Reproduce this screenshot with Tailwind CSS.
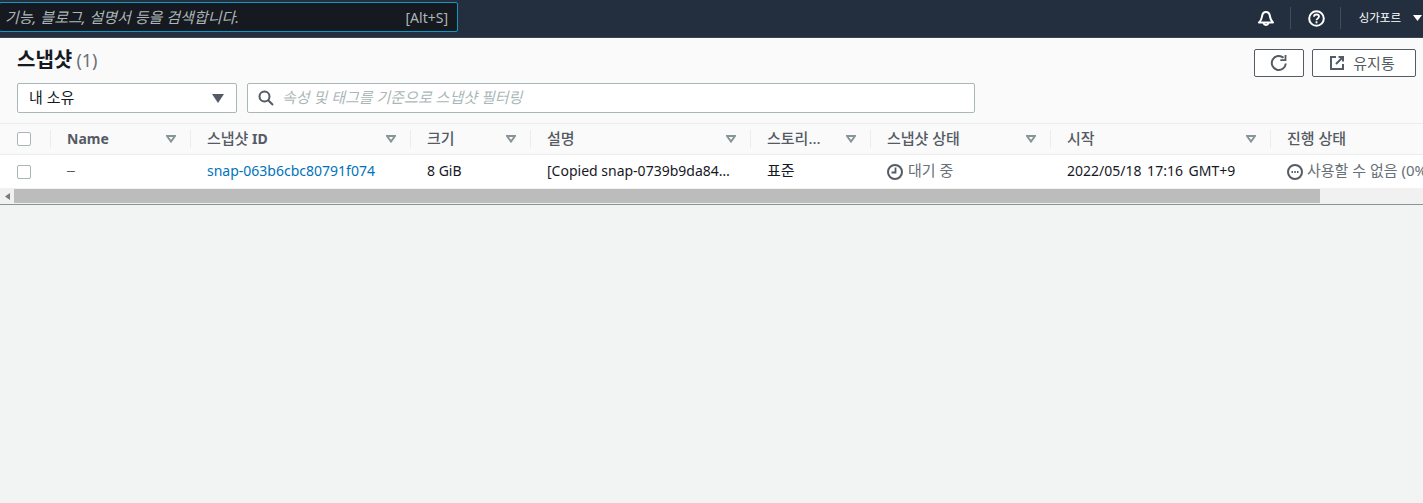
<!DOCTYPE html>
<html lang="ko">
<head>
<meta charset="utf-8">
<script src="https://cdn.jsdelivr.net/npm/@tailwindcss/browser@4"></script>
</head>
<body class="w-[1423px] h-[503px] overflow-hidden bg-[#f2f3f3] text-[14px] text-[#16191f] font-['Noto_Sans','Noto_Sans_CJK_KR',sans-serif]">
<header class="h-[38px] bg-[#232f3e] flex items-start border-b border-[#3a4553]">
  <div class="mt-[2px] w-[459px] h-[30px] -ml-px bg-[#16191f] border border-[#0a9bc5] rounded-[2px] flex items-center justify-between pl-[5px] pr-[9px] text-[#aab7b8]">
    <span class="italic text-[15px]">기능, 블로그, 설명서 등을 검색합니다.</span>
    <span class="text-[14px]">[Alt+S]</span>
  </div>
  <div class="ml-auto flex items-center h-[36px] text-white">
    <svg class="w-[18px] h-[18px]" viewBox="0 0 18 18" fill="none" stroke="#fff" stroke-width="2" stroke-linejoin="round"><path d="M2 13.500h14c-1.800-1.600-2.600-3-3-6-.3-2.400-1.700-4.500-4-4.500S5.300 5.100 5 7.500c-.4 3-1.200 4.400-3 6z"/><path d="M6.500 14a2.600 2.600 0 0 0 5 0"/></svg>
    <div class="w-px h-[22px] bg-[#414d5c] ml-[15px] mr-[17px]"></div>
    <svg class="w-[17px] h-[17px]" viewBox="0 0 17 17" fill="none" stroke="#fff" stroke-width="2"><circle cx="8.500" cy="8.500" r="7.300"/><path d="M6 6.800c0-1.500 1.100-2.300 2.500-2.300s2.500.8 2.500 2.100c0 1.900-2.500 1.800-2.500 3.700" stroke-width="1.800"/><path d="M8.500 11.300v2" stroke-width="1.800"/></svg>
    <div class="w-px h-[22px] bg-[#414d5c] ml-[15px] mr-[18px]"></div>
    <span class="text-[11.5px]">싱가포르</span>
    <svg class="ml-[12px] mr-[1px] w-[9px] h-[6px]" viewBox="0 0 9 6" fill="#fff"><path d="M0 0h9L4.500 6z"/></svg>
  </div>
</header>

<section class="bg-white border-b-2 border-[#879596] h-[167px]">
  <div class="h-[86px] bg-[#fafafa] px-[17px] pt-[9px] border-b border-[#eaeded]">
    <div class="flex items-start justify-between h-[36px]">
      <h1 class="text-[20px] font-bold leading-[26px]">스냅샷 <span class="font-normal text-[#687078] text-[18px] -ml-px">(1)</span></h1>
      <div class="flex gap-[8px] mr-[-10px] mt-[2px]">
        <button class="w-[50px] h-[28px] bg-white border border-[#545b64] rounded-[2px] flex items-center justify-center">
          <svg class="w-[18px] h-[18px]" viewBox="0 0 18 18" fill="none" stroke="#545b64" stroke-width="2"><path d="M15.800 9.500a7 7 0 1 1-2.300-5.700"/><path d="M15.500 1v5.200h-5.200" stroke-width="1.800"/></svg>
        </button>
        <button class="w-[104px] h-[28px] bg-white border border-[#545b64] rounded-[2px] flex items-center justify-center gap-[9px] text-[#545b64] pr-[3px]">
          <svg class="w-[14px] h-[14px]" viewBox="0 0 14 14" fill="none" stroke="#545b64" stroke-width="2"><path d="M6 1H1v12h12V8"/><path d="M6 8l7-7M8.500 1H13v4.500"/></svg>
          <span class="text-[15px]">유지통</span>
        </button>
      </div>
    </div>
    <div class="flex gap-[10px]">
      <div class="w-[220px] h-[30px] bg-white border border-[#aab7b8] rounded-[2px] flex items-center justify-between pl-[11px] pr-[12px]">
        <span class="text-[15px] leading-[24px] -mt-[3px]">내 소유</span>
        <svg class="w-[12px] h-[9px]" viewBox="0 0 12 9" fill="#545b64"><path d="M0 0h12L6 9z"/></svg>
      </div>
      <div class="w-[728px] h-[30px] bg-white border border-[#aab7b8] rounded-[2px] flex items-center pl-[10px] gap-[8px]">
        <svg class="w-[16px] h-[16px]" viewBox="0 0 16 16" fill="none" stroke="#545b64" stroke-width="2"><circle cx="6.500" cy="6.500" r="5"/><path d="M10.200 10.200L15 15"/></svg>
        <span class="italic text-[#aab7b8] text-[15px] leading-[24px] -mt-[3px]">속성 및 태그를 기준으로 스냅샷 필터링</span>
      </div>
    </div>
  </div>

  <div class="flex h-[31px] bg-[#fafafa] border-b border-[#eaeded] items-center font-bold text-[#545b64] overflow-hidden">
    <div class="w-[51px] shrink-0 flex items-center pl-[17px] h-[18px] border-r border-[#eaeded]"><span class="w-[14px] h-[14px] bg-white border border-[#aab7b8] rounded-[2px]"></span></div>
    <div class="w-[140px] shrink-0 h-[18px] flex items-center justify-between pl-[16px] pr-[14px] border-r border-[#eaeded]"><span class="-mt-[2px]">Name</span><svg class="w-[10px] h-[8px]" viewBox="0 0 10 8" fill="none" stroke="#879596" stroke-width="2"><path d="M1 1h8L5 6.500z"/></svg></div>
    <div class="w-[220px] shrink-0 h-[18px] flex items-center justify-between pl-[16px] pr-[14px] border-r border-[#eaeded]"><span class="-mt-[2px] font-medium"><span class="text-[15px]">스냅샷</span> <b>ID</b></span><svg class="w-[10px] h-[8px]" viewBox="0 0 10 8" fill="none" stroke="#879596" stroke-width="2"><path d="M1 1h8L5 6.500z"/></svg></div>
    <div class="w-[120px] shrink-0 h-[18px] flex items-center justify-between pl-[16px] pr-[14px] border-r border-[#eaeded]"><span class="-mt-[2px] text-[15px] font-medium">크기</span><svg class="w-[10px] h-[8px]" viewBox="0 0 10 8" fill="none" stroke="#879596" stroke-width="2"><path d="M1 1h8L5 6.500z"/></svg></div>
    <div class="w-[220px] shrink-0 h-[18px] flex items-center justify-between pl-[16px] pr-[14px] border-r border-[#eaeded]"><span class="-mt-[2px] text-[15px] font-medium">설명</span><svg class="w-[10px] h-[8px]" viewBox="0 0 10 8" fill="none" stroke="#879596" stroke-width="2"><path d="M1 1h8L5 6.500z"/></svg></div>
    <div class="w-[120px] shrink-0 h-[18px] flex items-center justify-between pl-[16px] pr-[14px] border-r border-[#eaeded]"><span class="-mt-[2px] text-[15px] font-medium">스토리...</span><svg class="w-[10px] h-[8px]" viewBox="0 0 10 8" fill="none" stroke="#879596" stroke-width="2"><path d="M1 1h8L5 6.500z"/></svg></div>
    <div class="w-[180px] shrink-0 h-[18px] flex items-center justify-between pl-[16px] pr-[14px] border-r border-[#eaeded]"><span class="-mt-[2px] text-[15px] font-medium">스냅샷 상태</span><svg class="w-[10px] h-[8px]" viewBox="0 0 10 8" fill="none" stroke="#879596" stroke-width="2"><path d="M1 1h8L5 6.500z"/></svg></div>
    <div class="w-[220px] shrink-0 h-[18px] flex items-center justify-between pl-[16px] pr-[14px] border-r border-[#eaeded]"><span class="-mt-[2px] text-[15px] font-medium">시작</span><svg class="w-[10px] h-[8px]" viewBox="0 0 10 8" fill="none" stroke="#879596" stroke-width="2"><path d="M1 1h8L5 6.500z"/></svg></div>
    <div class="w-[152px] shrink-0 pl-[16px]"><span class="-mt-[2px] block text-[15px] font-medium">진행 상태</span></div>
  </div>

  <div class="flex h-[33px] bg-white items-center whitespace-nowrap overflow-hidden">
    <div class="w-[50px] shrink-0 pl-[17px] flex"><span class="w-[14px] h-[14px] bg-white border border-[#aab7b8] rounded-[2px]"></span></div>
    <div class="w-[140px] shrink-0 pl-[17px] -mt-[2px] text-[#545b64] font-['Liberation_Sans',sans-serif]">–</div>
    <div class="w-[220px] shrink-0 pl-[17px] -mt-[2px] text-[#0073bb]">snap-063b6cbc80791f074</div>
    <div class="w-[120px] shrink-0 pl-[17px] -mt-[2px]">8 GiB</div>
    <div class="w-[220px] shrink-0 pl-[17px] -mt-[2px]">[Copied snap-0739b9da84…</div>
    <div class="w-[120px] shrink-0 pl-[17px] -mt-[2px] text-[15px]">표준</div>
    <div class="w-[180px] shrink-0 pl-[17px] flex items-center gap-[5px] text-[#687078]">
      <svg class="w-[16px] h-[16px]" viewBox="0 0 16 16" fill="none" stroke="#545b64" stroke-width="2"><circle cx="8" cy="8" r="7"/><path d="M8.500 3.500V8.500H4.500" stroke-width="1.800"/></svg>
      <span class="text-[15px] -mt-[2px]">대기 중</span>
    </div>
    <div class="w-[220px] shrink-0 pl-[17px] -mt-[2px] [word-spacing:2px]">2022/05/18 17:16 GMT+9</div>
    <div class="w-[153px] shrink-0 pl-[17px] flex items-center gap-[4px] text-[#687078] overflow-hidden">
      <svg class="w-[16px] h-[16px] shrink-0" viewBox="0 0 16 16" fill="none" stroke="#545b64" stroke-width="2"><circle cx="8" cy="8" r="7"/><path d="M4.500 8h1.500M7.300 8h1.500M10 8h1.500" stroke-width="2"/></svg>
      <span class="text-[15px] -mt-[2px]">사용할 수 없음 (0%)</span>
    </div>
  </div>

  <div class="h-[16px] bg-[#f1f1f1] flex items-center">
    <div class="w-[14px] flex justify-center"><svg class="w-[5px] h-[7px]" viewBox="0 0 5 7" fill="#7a7a7a"><path d="M5 0v7L0 3.500z"/></svg></div>
    <div class="w-[1306px] h-[14px] bg-[#bcbcbc]"></div>
  </div>
</section>
</body>
</html>
